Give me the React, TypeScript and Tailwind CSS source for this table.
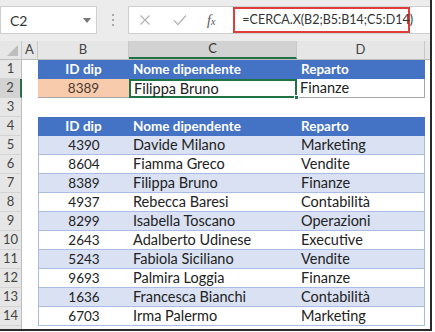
const font = { fontFamily: "Lato, 'Open Sans', sans-serif" };

const dataRows: [string, string, string][] = [
  ["4390", "Davide Milano", "Marketing"],
  ["8604", "Fiamma Greco", "Vendite"],
  ["8389", "Filippa Bruno", "Finanze"],
  ["4937", "Rebecca Baresi", "Contabilità"],
  ["8299", "Isabella Toscano", "Operazioni"],
  ["2643", "Adalberto Udinese", "Executive"],
  ["5243", "Fabiola Siciliano", "Vendite"],
  ["9693", "Palmira Loggia", "Finanze"],
  ["1636", "Francesca Bianchi", "Contabilità"],
  ["6703", "Irma Palermo", "Marketing"],
];

function RowNum({ n, active }: { n: number; active?: boolean }) {
  return (
    <div
      className={`w-[22px] shrink-0 h-full flex items-center justify-center text-[13px] text-[#444] border-b border-[#d4d4d4] ${
        active ? "bg-[#d3d3d3] border-r-2 border-r-[#217346]" : "bg-[#e6e6e6] border-r border-r-[#bdbdbd]"
      }`}
    >
      {n}
    </div>
  );
}

function HeaderRow({ n }: { n: number }) {
  return (
    <div className="flex h-[19px]">
      <RowNum n={n} />
      <div className="w-[16px] shrink-0" />
      <div className="w-[387px] shrink-0 flex bg-[#4472c4] text-white font-bold text-[13.5px]">
        <div className="w-[91px] flex items-center justify-center">ID dip</div>
        <div className="w-[168px] flex items-center pl-[4px]">Nome dipendente</div>
        <div className="w-[128px] flex items-center pl-[4px]">Reparto</div>
      </div>
      <div className="flex-1" />
    </div>
  );
}

export default function App() {
  return (
    <div className="w-[435px] h-[332px] bg-white overflow-hidden text-[#222]" style={font}>
      <div className="w-[432px] h-[331px] border-r-2 border-b-2 border-[#2a2a2a] overflow-hidden">
        {/* formula bar */}
        <div className="h-[41px] bg-[#ececec] pt-[6px] flex">
          <div className="w-[97px] h-[28px] bg-white border border-[#d0d0d0] flex items-center pl-[9px] pr-[5px] text-[14px] text-[#333]">
            <span className="flex-1">C2</span>
            <svg width="8" height="5" viewBox="0 0 8 5">
              <path d="M0 0 L8 0 L4 5 Z" fill="#777" />
            </svg>
          </div>
          <div className="w-[31px] flex flex-col items-center justify-center gap-[3px] h-[28px]">
            <div className="w-[2px] h-[2px] bg-[#aaa]" />
            <div className="w-[2px] h-[2px] bg-[#aaa]" />
            <div className="w-[2px] h-[2px] bg-[#aaa]" />
          </div>
          <div className="flex-1 h-[28px] bg-white border border-[#d0d0d0] border-r-0 flex items-center">
            <svg width="10" height="10" viewBox="0 0 10 10" className="ml-[11px]">
              <path d="M0.5 0.5 L9.5 9.5 M9.5 0.5 L0.5 9.5" stroke="#b5b5b5" strokeWidth="1.3" />
            </svg>
            <svg width="14" height="12" viewBox="0 0 14 12" className="ml-[23px]">
              <path d="M1 6.5 L5 10.5 L13 1.5" stroke="#b5b5b5" strokeWidth="1.3" fill="none" />
            </svg>
            <span
              className="ml-[20px] italic text-[14px] text-[#555]"
              style={{ fontFamily: "'Liberation Serif', serif" }}
            >
              f<span className="text-[10px]">x</span>
            </span>
            <div className="ml-[18px] h-[26px] w-[177px] border-2 border-[#e03c3c] flex items-center pl-[7px] text-[12.5px] text-[#333] whitespace-nowrap">
              =CERCA.X(B2;B5:B14;C5:D14)
            </div>
          </div>
        </div>

        {/* column headers */}
        <div className="flex h-[19px] bg-[#e6e6e6] text-[13px] text-[#444] border-b border-[#bdbdbd]">
          <div className="w-[22px] shrink-0 flex items-end justify-end pr-[3px] pb-[3px] border-r border-[#c8c8c8]">
            <svg width="11" height="11" viewBox="0 0 11 11">
              <path d="M11 0 L11 11 L0 11 Z" fill="#bdbdbd" />
            </svg>
          </div>
          <div className="w-[16px] shrink-0 flex items-center justify-center border-r border-[#c8c8c8]">A</div>
          <div className="w-[91px] shrink-0 flex items-center justify-center border-r border-[#c8c8c8]">B</div>
          <div className="w-[168px] shrink-0 flex items-center justify-center bg-[#d2d2d2] border-b-2 border-[#217346] border-r border-r-[#c8c8c8] text-[#333]">
            C
          </div>
          <div className="w-[128px] shrink-0 flex items-center justify-center border-r border-[#c8c8c8]">D</div>
          <div className="flex-1" />
        </div>

        <HeaderRow n={1} />

        {/* row 2 */}
        <div className="flex h-[19px] text-[14.5px]">
          <RowNum n={2} active />
          <div className="w-[16px] shrink-0" />
          <div className="w-[91px] shrink-0 bg-[#f8cbad] flex items-center justify-center border-b border-[#a6a6a6] text-[#4a3a30] text-[13.5px]">
            8389
          </div>
          <div className="w-[168px] shrink-0 relative flex items-center pl-[3px] border-2 border-[#217346] bg-white">
            Filippa Bruno
            <div className="absolute right-[-4px] bottom-[-4px] w-[5px] h-[5px] bg-[#217346] border border-white" />
          </div>
          <div className="w-[128px] shrink-0 flex items-center pl-[3px] border-b border-r border-[#a6a6a6]">Finanze</div>
          <div className="flex-1" />
        </div>

        {/* row 3 */}
        <div className="flex h-[19px]">
          <RowNum n={3} />
        </div>

        <HeaderRow n={4} />

        {dataRows.map((r, i) => (
          <div key={r[0]} className="flex h-[19px] text-[14.5px]">
            <RowNum n={i + 5} />
            <div className="w-[16px] shrink-0" />
            <div
              className={`w-[387px] shrink-0 flex border-x border-b border-[#a9bce4] ${
                i % 2 === 0 ? "bg-[#d9e1f2]" : "bg-white"
              }`}
            >
              <div className="w-[90px] flex items-center justify-center text-[13.5px]">{r[0]}</div>
              <div className="w-[168px] flex items-center pl-[4px]">{r[1]}</div>
              <div className="w-[127px] flex items-center pl-[4px]">{r[2]}</div>
            </div>
            <div className="flex-1" />
          </div>
        ))}

        <div className="flex h-[19px]">
          <RowNum n={15} />
        </div>
      </div>
    </div>
  );
}
